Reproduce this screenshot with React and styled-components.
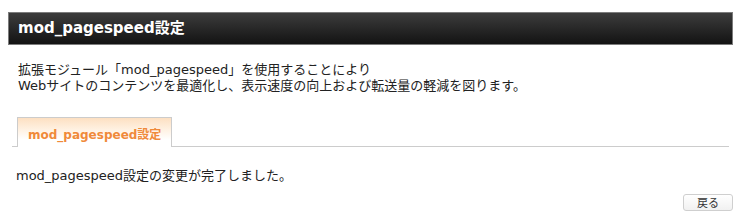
import styled, { createGlobalStyle } from "styled-components";

const GlobalStyle = createGlobalStyle`
    body {
        margin: 0;
        background: #fff;
        font-family: "DejaVu Sans", "Noto Sans CJK JP", sans-serif;
        color: #222;
    }
`;

function App() {
    return (
        <Page>
            <GlobalStyle />
            <HeaderBar>
                <Title>mod_pagespeed設定</Title>
            </HeaderBar>

            <Description>
                拡張モジュール「mod_pagespeed」を使用することにより
                <br />
                Webサイトのコンテンツを最適化し、表示速度の向上および転送量の軽減を図ります。
            </Description>

            <TabBar>
                <Tab>mod_pagespeed設定</Tab>
            </TabBar>

            <Message>mod_pagespeed設定の変更が完了しました。</Message>

            <ButtonRow>
                <BackButton>戻る</BackButton>
            </ButtonRow>
        </Page>
    );
}

export default App;

const Page = styled.div`
    padding: 12px 9px 0 8px;
`;

const HeaderBar = styled.div`
    height: 33px;
    box-sizing: border-box;
    border: 1px solid #7c7c7c;
    background: linear-gradient(to bottom, #3c3c3c, #131313);
    display: flex;
    align-items: center;
    padding-left: 9px;
`;

const Title = styled.h1`
    margin: 0;
    color: #fff;
    font-size: 15px;
    font-weight: bold;
    line-height: 1;
`;

const Description = styled.p`
    margin: 17px 0 0 10px;
    font-size: 13px;
    line-height: 16px;
`;

const TabBar = styled.div`
    margin: 23px 4px 0 4px;
    padding-left: 5px;
    display: flex;
    border-bottom: 1px solid #cccccc;
`;

const Tab = styled.div`
    width: 155px;
    height: 30px;
    box-sizing: border-box;
    margin-bottom: -1px;
    border: 1px solid #cccccc;
    border-bottom: none;
    background: linear-gradient(to bottom, #fde0c2 0%, #fff3e6 45%, #ffffff 75%);
    color: #f08a3a;
    font-size: 12px;
    font-weight: bold;
    display: flex;
    align-items: center;
    padding: 1px 0 0 10px;
`;

const Message = styled.p`
    margin: 21px 0 0 8px;
    font-size: 13px;
    line-height: 16px;
`;

const ButtonRow = styled.div`
    display: flex;
    justify-content: flex-end;
    margin-top: 10px;
`;

const BackButton = styled.button`
    width: 50px;
    height: 17px;
    padding: 0;
    border: 1px solid #cfcfcf;
    border-radius: 3px;
    background: linear-gradient(to bottom, #ffffff, #f1f1f1);
    color: #333;
    font-family: "Noto Sans CJK JP", sans-serif;
    font-size: 11px;
    line-height: 15px;
    cursor: pointer;
`;
